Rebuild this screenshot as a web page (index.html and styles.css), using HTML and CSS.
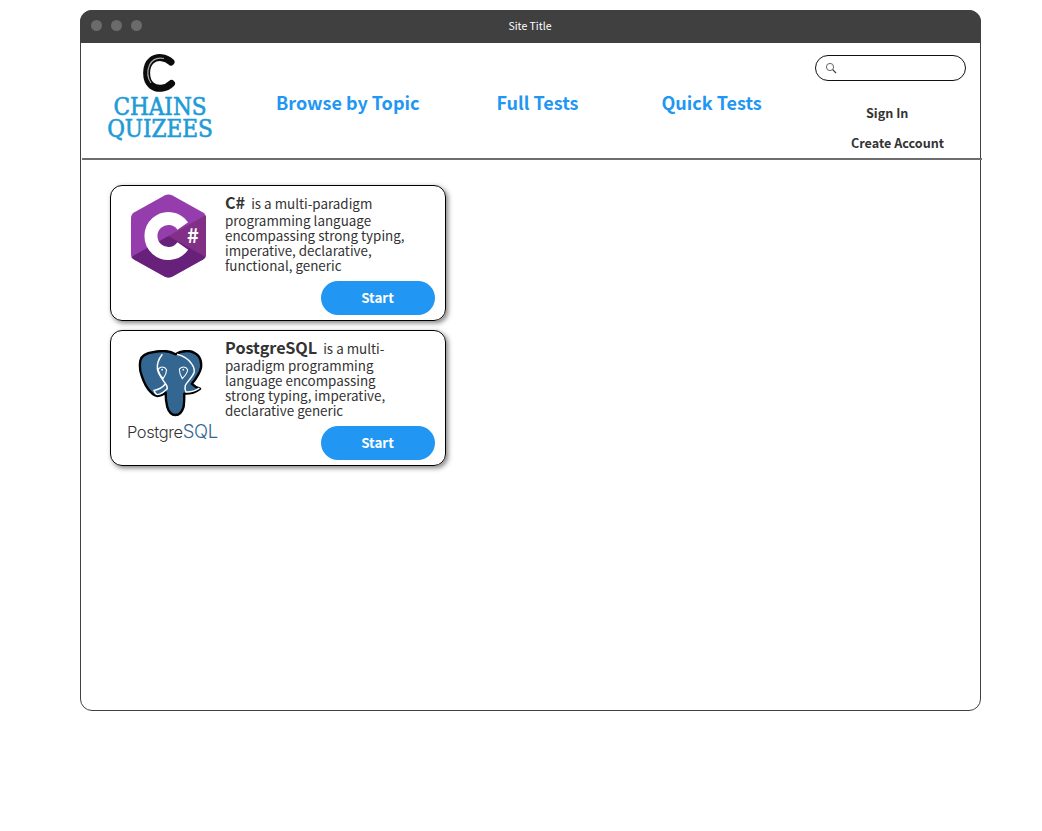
FILE: index.html
```html
<!DOCTYPE html>
<html lang="en">
<head>
  <meta charset="UTF-8" />
  <title>Chains Quizees</title>
  <link rel="stylesheet" href="styles.css">
</head>
<body>
  <div class="window">
    <div class="titlebar">
      <div class="dots"><span></span><span></span><span></span></div>
      <div class="site-title">Site Title</div>
    </div>

    <div class="header">
      <div class="logo">
        <svg class="logo-c" width="34" height="38" viewBox="0 0 34 38">
          <path d="M29 8 C24 3 15 2 9.500 6.500 C3 12 3 26 9.500 31.500 C15 36 24 35 29.500 29.500" fill="none" stroke="#0c0c0c" stroke-width="7" stroke-linecap="round"/>
          <path d="M22 4.500 C15 3 10 6 7.500 11 C5 17 5.500 24 9 29" fill="none" stroke="#aaa" stroke-width="1.200"/>
        </svg>
        <div class="logo-text">CHAINS<br>QUIZEES</div>
      </div>

      <div class="nav">
        <a class="nav-browse">Browse by Topic</a>
        <a class="nav-full">Full Tests</a>
        <a class="nav-quick">Quick Tests</a>
      </div>

      <div class="account">
        <div class="search">
          <svg width="12" height="12" viewBox="0 0 12 12">
            <circle cx="5" cy="5" r="3.6" fill="none" stroke="#555" stroke-width="0.9"/>
            <path d="M7.7 7.7 L11 11" stroke="#333" stroke-width="1.1"/>
          </svg>
        </div>
        <a class="sign-in">Sign In</a>
        <a class="create">Create Account</a>
      </div>
    </div>

    <div class="content">
      <div class="card">
        <div class="card-icon">
          <svg class="csharp" width="75" height="84" viewBox="0 0 75 84">
            <clipPath id="hex">
              <path d="M33.500 1.500 Q37.500 -0.500 41.500 1.500 L72 18.500 Q75 20.500 75 24 L75 60 Q75 63.500 72 65.500 L41.500 82.500 Q37.500 84.500 33.500 82.500 L3 65.500 Q0 63.500 0 60 L0 24 Q0 20.500 3 18.500 Z"/>
            </clipPath>
            <g clip-path="url(#hex)">
              <rect width="75" height="84" fill="#953dac"/>
              <path d="M37.500 42 L75 21 L75 63 Z" fill="#823085"/>
              <path d="M37.500 42 L75 63 L75 84 L0 84 L0 63 Z" fill="#68217a"/>
            </g>
            <path d="M51.800 32 A17.500 17.500 0 1 0 51.800 52" fill="none" stroke="#fff" stroke-width="13"/>
            <text class="hash" x="62" y="49">#</text>
          </svg>
        </div>
        <div class="card-body">
          <p class="desc"><b>C#</b> &nbsp;is a multi-paradigm programming language encompassing strong typing, imperative, declarative, functional, generic</p>
          <button class="start">Start</button>
        </div>
      </div>

      <div class="card">
        <div class="card-icon pg">
          <svg width="65" height="67" viewBox="0 0 66 68">
            <path d="M16.300 2 C9 3 3 6 2.300 11 C1.500 17 2 22 3.700 26 C6 33 9 39 13 42.700 C15 45 17 46.700 19.700 46.700 C23 46.700 26 45 28 42.700 C28 48 28.500 53 29.700 57.700 C31 62 34 66 38 66 C42 66 45 62 46.300 57.700 C47 53 47 49 47 44.300 C53 44.500 59 42.500 63 39.300 C60 38.500 57 36.500 54.700 34.300 C59 29 63 23 64 17.700 C64.500 13 63.500 8.500 61.300 6 C58 2.500 54 1 49.700 1 C45 1 41 2.500 38 4.300 C34 2 30 1 26 1 C22 1 19 1.500 16.300 2 Z" fill="#336791" stroke="#000" stroke-width="2.400" stroke-linejoin="round"/>
            <path d="M24.700 4.300 C21 9 19 14 19.700 19.300 C20.500 25 25 30 28 34.300 C29.500 36 29.700 38 29.700 39.300 C27 42 23 45 19.700 45.300 C18 45 17 43 16.300 41 C20 40.500 25 38 28 34.300" fill="none" stroke="#fff" stroke-width="1.500"/>
            <path d="M39.700 4.300 C46 6 52 10 54.700 14.300 C56.500 17 57.500 20 57 22.700 C55 28 50 32 48 36 C47.500 38 48 41 48.700 42.700 C53 43 58 41.500 62.300 38.700" fill="none" stroke="#fff" stroke-width="1.500"/>
            <path d="M20.500 19.500 C23 16.500 27 16.500 29 20 C29 24 27 27 25.500 29 C23 26 21 23 20.500 19.500 Z" fill="none" stroke="#fff" stroke-width="1.100"/>
            <path d="M42 19.500 C44.500 16.500 48.500 16.500 50.500 20 C50 24 47 27 45 29 C43 26 42 23 42 19.500 Z" fill="none" stroke="#fff" stroke-width="1.100"/>
            <circle cx="24.500" cy="20" r="0.9" fill="#fff"/>
            <circle cx="46" cy="20" r="0.9" fill="#fff"/>
          </svg>
          <div class="pg-name">Postgre<span>SQL</span></div>
        </div>
        <div class="card-body">
          <p class="desc"><b>PostgreSQL</b> &nbsp;is a multi-paradigm programming language encompassing strong typing, imperative, declarative generic</p>
          <button class="start">Start</button>
        </div>
      </div>
    </div>
  </div>
</body>
</html>
```

FILE: styles.css
```css
* {
  box-sizing: border-box;
}
body {
  margin: 0;
  background: #fff;
  color: #333;
  font-family: "Noto Sans CJK SC", "Noto Sans", sans-serif;
}
.window {
  width: 901px;
  height: 701px;
  margin: 10px 0 0 80px;
  border: 1px solid #404040;
  border-radius: 12px;
}
.titlebar {
  display: flex;
  align-items: center;
  height: 33px;
  margin: -1px -1px 0;
  padding: 0 0 3px 11px;
  background: #404040;
  border-radius: 12px 12px 0 0;
  position: relative;
}
.dots {
  display: flex;
  gap: 9px;
}
.dots span {
  width: 11px;
  height: 11px;
  border-radius: 50%;
  background: #6b6b6b;
}
.site-title {
  position: absolute;
  left: -1px;
  right: 0;
  text-align: center;
  color: #fff;
  font-size: 10.5px;
}
.header {
  display: flex;
  height: 117px;
  margin: 0 -2px 0 1px;
  border-bottom: 2px solid #6e6e6e;
}
.logo {
  flex: none;
  width: 156px;
  padding-top: 11px;
  display: flex;
  flex-direction: column;
  align-items: center;
}
.logo-c {
  display: block;
  margin-left: -2px;
}
.logo-text {
  margin-top: 4px;
  color: #1e9bd7;
  font-family: "DejaVu Serif", serif;
  font-stretch: condensed;
  font-size: 24px;
  line-height: 22px;
  text-align: center;
  -webkit-text-stroke: 0.6px #1e9bd7;
}
.nav {
  display: flex;
  padding: 46px 0 0 38px;
  color: #2196f3;
  font-size: 18px;
  font-weight: 700;
  line-height: 26px;
  white-space: nowrap;
}
.nav-browse {
  margin-right: 77px;
}
.nav-full {
  margin-right: 83px;
}
.account {
  flex: none;
  margin-left: auto;
  margin-right: 16px;
  padding-top: 12px;
  width: 151px;
  display: flex;
  flex-direction: column;
  font-size: 12.6px;
  font-weight: 700;
  line-height: 18px;
  white-space: nowrap;
}
.search {
  display: flex;
  align-items: center;
  height: 26px;
  padding-left: 9px;
  border: 1px solid #111;
  border-radius: 13px;
}
.sign-in {
  margin: 23px 0 0 51px;
}
.create {
  margin: 12px 0 0 36px;
}
.content {
  padding: 25px 0 0 29px;
  display: flex;
  flex-direction: column;
  gap: 9px;
}
.card {
  display: flex;
  width: 336px;
  height: 136px;
  border: 1px solid #000;
  border-radius: 12px;
  box-shadow: 2px 2px 5px rgba(0, 0, 0, 0.5);
}
.card-icon {
  width: 114px;
  padding: 8px 0 0 20px;
}
.csharp {
  display: block;
}
.hash {
  fill: #fff;
  font-family: "Noto Sans CJK SC", sans-serif;
  font-size: 20px;
  font-weight: 700;
  text-anchor: middle;
}
.pg {
  padding: 19px 0 0 16px;
}
.pg svg {
  display: block;
  margin-left: 11px;
}
.pg-name {
  margin-top: 4px;
  color: #333;
  font-family: "Inter", sans-serif;
  font-size: 16.5px;
  font-weight: 300;
  line-height: 20px;
  letter-spacing: -0.4px;
  white-space: nowrap;
}
.pg-name span {
  color: #336791;
  font-size: 18.5px;
}
.card-body {
  flex: 1;
  position: relative;
  padding-top: 5px;
}
.desc {
  margin: 0;
  width: 186px;
  font-size: 13.4px;
  line-height: 15px;
}
.desc b {
  font-size: 16.2px;
  line-height: 22px;
}
.start {
  position: absolute;
  right: 10px;
  bottom: 5px;
  width: 114px;
  height: 34px;
  padding: 0 1px 2px 0;
  border: none;
  border-radius: 17px;
  background: #2196f3;
  color: #fff;
  font-family: inherit;
  font-size: 13.4px;
  font-weight: 700;
}
```
